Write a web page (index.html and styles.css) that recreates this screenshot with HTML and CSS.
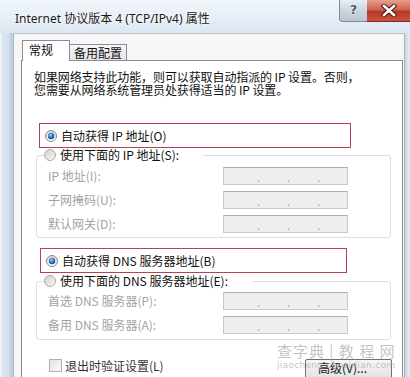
FILE: index.html
```html
<!DOCTYPE html>
<html>
<head>
<meta charset="utf-8">
<link rel="stylesheet" href="styles.css">
</head>
<body>
<svg class="defs" width="0" height="0" aria-hidden="true">
  <defs>
    <linearGradient id="ringOn" x1="0" y1="0" x2="0" y2="1">
      <stop offset="0" stop-color="#d6d6d6"/>
      <stop offset="1" stop-color="#fbfbfb"/>
    </linearGradient>
    <radialGradient id="dotOn" cx="0.4" cy="0.35" r="0.7">
      <stop offset="0" stop-color="#9fd0f5"/>
      <stop offset="0.55" stop-color="#2f78c4"/>
      <stop offset="1" stop-color="#173f7a"/>
    </radialGradient>
    <linearGradient id="ringOff" x1="0" y1="0" x2="1" y2="1">
      <stop offset="0" stop-color="#cfcfcf"/>
      <stop offset="1" stop-color="#fafafa"/>
    </linearGradient>
  </defs>
</svg>

<div class="window">
  <div class="titlebar">
    <div class="title">Internet 协议版本 4 (TCP/IPv4) 属性</div>
    <div class="caption-btns">
      <div class="btn-help">?</div>
      <div class="btn-close">
        <svg width="16" height="13" viewBox="0 0 16 13">
          <path d="M3 2 L13 11 M13 2 L3 11" stroke="#4a1a16" stroke-width="4.6" stroke-linecap="square"/>
          <path d="M3 2 L13 11 M13 2 L3 11" stroke="#ffffff" stroke-width="2.6" stroke-linecap="square"/>
        </svg>
      </div>
    </div>
  </div>

  <div class="frame">
    <div class="edge-left"></div>
    <div class="client">
      <div class="tabs">
        <div class="tab tab-active">常规</div>
        <div class="tab">备用配置</div>
      </div>
      <div class="page">
        <p class="desc">如果网络支持此功能，则可以获取自动指派的 IP 设置。否则，<br>您需要从网络系统管理员处获得适当的 IP 设置。</p>

        <div class="mark mark-ip">
          <svg class="radio" viewBox="0 0 12 12"><circle cx="6" cy="6" r="5.5" fill="url(#ringOn)" stroke="#8b8b8b"/><circle cx="6" cy="6" r="3.2" fill="url(#dotOn)"/></svg>
          <span>自动获得 IP 地址(O)</span>
        </div>

        <fieldset class="group group-ip">
          <legend class="legend legend-ip">
            <svg class="radio" viewBox="0 0 12 12"><circle cx="6" cy="6" r="5.5" fill="url(#ringOff)" stroke="#a9a9a9"/></svg>
            <span>使用下面的 IP 地址(S):</span>
          </legend>
          <div class="row"><span class="lbl">IP 地址(I):</span><div class="ip"><span>.</span><span>.</span><span>.</span></div></div>
          <div class="row"><span class="lbl">子网掩码(U):</span><div class="ip"><span>.</span><span>.</span><span>.</span></div></div>
          <div class="row"><span class="lbl">默认网关(D):</span><div class="ip"><span>.</span><span>.</span><span>.</span></div></div>
        </fieldset>

        <div class="mark mark-dns">
          <svg class="radio" viewBox="0 0 12 12"><circle cx="6" cy="6" r="5.5" fill="url(#ringOn)" stroke="#8b8b8b"/><circle cx="6" cy="6" r="3.2" fill="url(#dotOn)"/></svg>
          <span>自动获得 DNS 服务器地址(B)</span>
        </div>

        <fieldset class="group group-dns">
          <legend class="legend legend-dns">
            <svg class="radio" viewBox="0 0 12 12"><circle cx="6" cy="6" r="5.5" fill="url(#ringOff)" stroke="#a9a9a9"/></svg>
            <span>使用下面的 DNS 服务器地址(E):</span>
          </legend>
          <div class="row"><span class="lbl">首选 DNS 服务器(P):</span><div class="ip"><span>.</span><span>.</span><span>.</span></div></div>
          <div class="row"><span class="lbl">备用 DNS 服务器(A):</span><div class="ip"><span>.</span><span>.</span><span>.</span></div></div>
        </fieldset>

        <div class="foot">
          <span class="check"></span>
          <span class="check-label">退出时验证设置(L)</span>
          <div class="btn-adv">高级(V)...</div>
        </div>
      </div>
    </div>
    <div class="edge-right"></div>
  </div>
</div>

<div class="watermark">
  <div class="wm-big">查字典 | 教 程 网</div>
  <div class="wm-small">jiaocheng.chazidian.com</div>
</div>
</body>
</html>
```

FILE: styles.css
```css
html, body {
  margin: 0;
  padding: 0;
}
body {
  width: 410px;
  height: 377px;
  overflow: hidden;
  position: relative;
  background: #ffffff;
  font-family: "Noto Sans CJK SC", "Noto Sans", sans-serif;
  font-size: 12px;
  color: #111;
}
.defs {
  position: absolute;
  width: 0;
  height: 0;
}
.window {
  height: 377px;
  display: flex;
  flex-direction: column;
  background: linear-gradient(#f1f6fb, #d8e4f0 40px, #d5e1ee);
}

/* title bar */
.titlebar {
  height: 33px;
  display: flex;
  align-items: flex-start;
  flex: none;
}
.title {
  padding: 11px 0 0 15px;
  font-family: "Noto Sans", "Noto Sans CJK SC", sans-serif;
  font-size: 12px;
  line-height: 16px;
  color: #1a1a1a;
  text-shadow: 0 0 6px #ffffff, 0 0 3px #ffffff;
}
.caption-btns {
  margin-left: auto;
  display: flex;
}
.btn-help {
  width: 27px;
  height: 21px;
  border: 1px solid #7f8c99;
  border-top: none;
  border-right: none;
  border-radius: 0 0 0 4px;
  background: linear-gradient(#e9eef4, #c9d3de 55%, #bcc7d4);
  text-align: center;
  font-family: "DejaVu Sans", sans-serif;
  font-weight: bold;
  font-size: 13px;
  line-height: 20px;
  color: #50596a;
  text-shadow: 0 0 2px #ffffff, 0 0 1px #ffffff;
}
.btn-close {
  width: 43px;
  height: 21px;
  border-bottom: 1px solid #7a2a22;
  background: linear-gradient(#e6a090, #d0624f 45%, #b8382a 55%, #c9523e);
  display: flex;
  align-items: center;
  justify-content: center;
}

/* frame */
.frame {
  flex: 1;
  display: flex;
  min-height: 0;
}
.edge-left {
  width: 13px;
  flex: none;
  background: linear-gradient(to right, #f2f6fa, #dbe5ef 3px, #d6e1ed 9px, #b9cde2 11px, #c6d4e3);
}
.edge-right {
  width: 5px;
  flex: none;
  background: linear-gradient(to right, #c9d6e4, #e8eef5);
}
.client {
  flex: 1;
  background: #f6f6f6;
  border-left: 1px solid #a9b3bf;
  border-top: 1px solid #b7c1cc;
  border-right: 1px solid #a9b3bf;
  padding: 6px 1px 0 7px;
  display: flex;
  flex-direction: column;
  min-width: 0;
}

/* tabs */
.tabs {
  display: flex;
  align-items: flex-end;
  margin: 0 0 -1px 1px;
  position: relative;
  z-index: 1;
}
.tab {
  height: 15px;
  margin-bottom: 1px;
  padding: 0 4px 0 4px;
  border: 1px solid #898c95;
  border-bottom: none;
  border-left: none;
  background: linear-gradient(#f7f7f7, #e4e4e4);
  line-height: 15px;
  color: #111;
}
.tab-active {
  height: 20px;
  margin-bottom: 0;
  width: 40px;
  padding: 0 0 0 6px;
  border-left: 1px solid #898c95;
  background: #ffffff;
  line-height: 18px;
}

/* page */
.page {
  flex: 1;
  background: #ffffff;
  border: 1px solid #898c95;
  padding: 0 0 0 12px;
}
.desc {
  margin: 9px 0 0 0;
  line-height: 13px;
  color: #111;
  letter-spacing: -0.1px;
}

.mark {
  height: 23px;
  border: 1px solid #b8424c;
  display: flex;
  align-items: center;
  padding-left: 5px;
}
.mark-ip {
  margin: 27px 0 0 5px;
  width: 305px;
}
.mark-dns {
  margin: 10px 0 0 6px;
  width: 300px;
}
.radio {
  width: 12px;
  height: 12px;
  flex: none;
  margin-right: 4px;
}

.group {
  margin: 0 0 0 2px;
  width: 355px;
  box-sizing: border-box;
  border: 1px solid #d9dfe4;
  border-radius: 3px;
  padding: 4px 0 4px 7px;
}
.group-ip {
  margin-top: -1px;
}
.group-dns {
  padding-top: 3px;
  padding-bottom: 5px;
}
.legend {
  padding: 0 24px 0 0;
  line-height: 16px;
  display: flex;
  align-items: center;
  color: #111;
}
.row {
  display: flex;
  align-items: center;
  height: 18px;
  margin-left: 4px;
}
.row + .row {
  margin-top: 6px;
}
.lbl {
  width: 175px;
  color: #a3a3a3;
  line-height: 18px;
}
.ip {
  width: 125px;
  height: 18px;
  box-sizing: border-box;
  border: 1px solid #c9c9c9;
  border-top-color: #adadad;
  background: #efefef;
  display: flex;
  padding-left: 33px;
  gap: 27px;
  font-size: 11px;
  line-height: 18px;
  color: #9a9a9a;
}

.foot {
  margin: 19px 10px 0 15px;
  display: flex;
  align-items: flex-start;
}
.check {
  width: 11px;
  height: 11px;
  border: 1px solid #b0b0b0;
  background: linear-gradient(135deg, #e2e2e2, #fbfbfb);
  flex: none;
}
.check-label {
  margin-left: 3px;
  line-height: 13px;
  color: #333;
}
.btn-adv {
  margin-left: auto;
  width: 73px;
  height: 22px;
  border: 1px solid #707070;
  border-radius: 2px;
  background: linear-gradient(#f6f6f6, #ebebeb 50%, #dddddd);
  padding-left: 12px;
  line-height: 16px;
  color: #111;
}

/* watermark overlay */
.watermark {
  position: absolute;
  left: 277px;
  top: 342px;
  width: 115px;
  pointer-events: none;
  color: rgba(175, 175, 175, 0.75);
  text-align: center;
}
.wm-big {
  font-size: 15px;
  line-height: 18px;
  letter-spacing: 1px;
  white-space: nowrap;
}
.wm-small {
  font-family: "DejaVu Sans", sans-serif;
  font-size: 9px;
  line-height: 11px;
  white-space: nowrap;
  letter-spacing: 0.3px;
}
```
